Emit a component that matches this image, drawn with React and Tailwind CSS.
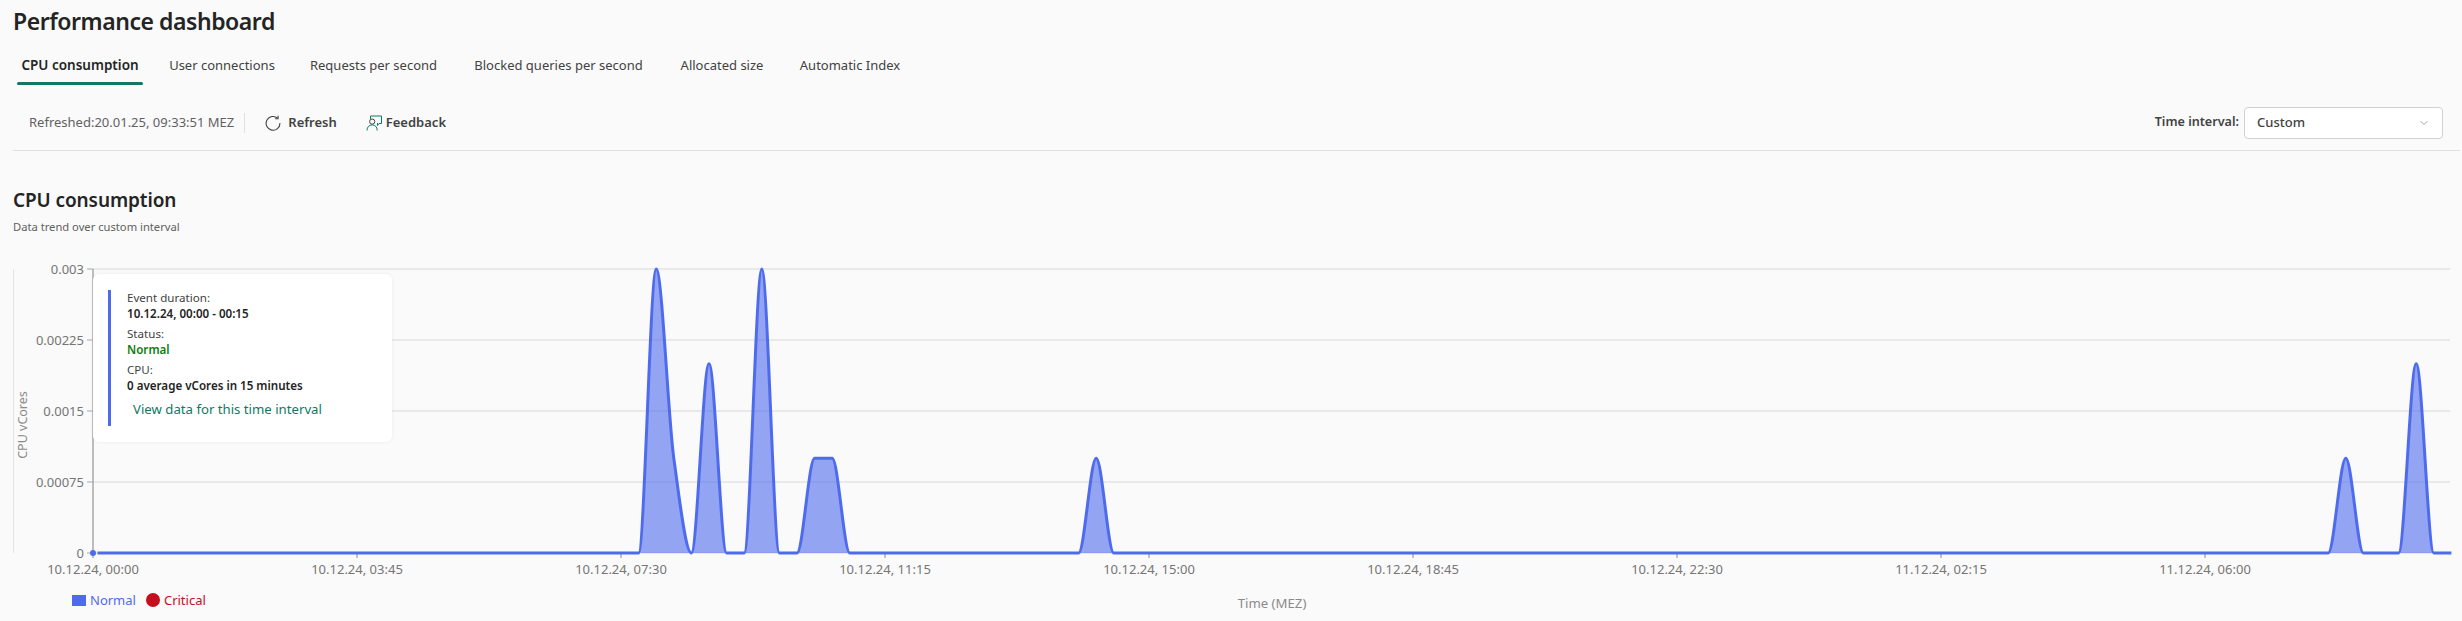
import React from "react";
import { ChevronDown } from "lucide-react";

const X0 = 93;
const STEP = 17.6;
const BASE = 553;
const TOP = 269;
const MAXV = 0.003;

const peaks = {
  32: 0.003, 33: 0.001, 35: 0.002, 38: 0.003, 41: 0.001, 42: 0.001,
  57: 0.001, 128: 0.001, 132: 0.002,
};
const data = Array.from({ length: 135 }, (_, i) => peaks[i] || 0);
const px = (i) => X0 + STEP * i;
const py = (v) => BASE - ((BASE - TOP) * v) / MAXV;

function monotonePath(from, to) {
  const xs = [];
  const ys = [];
  for (let i = from; i <= to; i++) {
    xs.push(px(i));
    ys.push(py(data[i]));
  }
  const n = xs.length;
  const d = [];
  for (let i = 0; i < n - 1; i++) d.push((ys[i + 1] - ys[i]) / (xs[i + 1] - xs[i]));
  const m = new Array(n).fill(0);
  for (let i = 1; i < n - 1; i++) {
    m[i] = d[i - 1] * d[i] <= 0 ? 0 : (2 * d[i - 1] * d[i]) / (d[i - 1] + d[i]);
  }
  let s = `M${xs[0]},${ys[0]}`;
  for (let i = 0; i < n - 1; i++) {
    const h = (xs[i + 1] - xs[i]) / 3;
    s += `C${xs[i] + h},${ys[i] + m[i] * h} ${xs[i + 1] - h},${ys[i + 1] - m[i + 1] * h} ${xs[i + 1]},${ys[i + 1]}`;
  }
  return s;
}

const line = monotonePath(0, 134);
const area = `${line}L${px(134)},${BASE}L${px(0)},${BASE}Z`;

const yTicks = [
  ["0.003", 269],
  ["0.00225", 340],
  ["0.0015", 411],
  ["0.00075", 482],
  ["0", 553],
];
const xTicks = [
  "10.12.24, 00:00",
  "10.12.24, 03:45",
  "10.12.24, 07:30",
  "10.12.24, 11:15",
  "10.12.24, 15:00",
  "10.12.24, 18:45",
  "10.12.24, 22:30",
  "11.12.24, 02:15",
  "11.12.24, 06:00",
];

const tabs = [
  ["CPU consumption", true, "ml-[4px] w-[126px]"],
  ["User connections", false, "ml-[23px] w-[112px]"],
  ["Requests per second", false, "ml-[29px] w-[133px]"],
  ["Blocked queries per second", false, "ml-[31px] w-[175px]"],
  ["Allocated size", false, "ml-[31px] w-[90px]"],
  ["Automatic Index", false, "ml-[29px] w-[108px]"],
];

function RefreshIcon() {
  return (
    <svg width="16" height="16" viewBox="0 0 16 16" fill="none" stroke="#424242" strokeWidth="1.1">
      <path d="M12.6 3.2A6.9 6.9 0 1 0 14.9 8" />
      <path d="M13.1 0.8v3h-3" />
    </svg>
  );
}

function FeedbackIcon() {
  return (
    <svg width="16" height="16" viewBox="0 0 16 16" fill="none" stroke="#117865" strokeWidth="1">
      <path d="M4.5 4V1h11v7.5l-2.5 0-1.5 2v-2.5" />
      <circle cx="6.2" cy="6.6" r="2.6" stroke="#424242" />
      <path d="M1 15.5c0-3.5 2.2-5.6 5.2-5.6s5 2 5 5.6" />
    </svg>
  );
}

export default function App() {
  return (
    <div className="relative h-[621px] w-full overflow-hidden bg-[#fafafa] font-['Noto_Sans',sans-serif] text-[#242424]">
      <h1 className="pl-[13px] pt-[4px] text-[23px] font-semibold leading-[34px] tracking-[-0.45px]">
        Performance dashboard
      </h1>

      <div className="mt-[7px] flex pl-[13px]">
        {tabs.map(([label, active, cls]) => (
          <div
            key={label}
            className={`relative flex h-[40px] shrink-0 items-center justify-center whitespace-nowrap leading-[20px] ${cls} ${active ? "text-[13.5px] font-semibold" : "text-[13px] text-[#424242]"}`}
          >
            {label}
            {active && (
              <span className="absolute bottom-[0px] left-0 h-[3px] w-full rounded-full bg-[#117865]" />
            )}
          </div>
        ))}
      </div>

      <div className="ml-[13px] mr-[2px] mt-[7px] flex h-[59px] items-center border-b border-[#e0e0e0] pt-[3px]">
        <span className="ml-[16px] whitespace-nowrap text-[13px] text-[#616161]">
          Refreshed:20.01.25, 09:33:51 MEZ
        </span>
        <span className="ml-[10px] h-[20px] w-px bg-[#e0e0e0]" />
        <span className="ml-[20px] flex items-center gap-[7px] text-[13px] font-semibold text-[#424242]">
          <RefreshIcon />
          Refresh
        </span>
        <span className="ml-[29px] flex items-center gap-[4px] text-[13px] font-semibold text-[#424242]">
          <FeedbackIcon />
          Feedback
        </span>
        <div className="ml-auto mr-[17px] flex items-center gap-[5px]">
          <span className="text-[12.6px] font-semibold text-[#424242]">Time interval:</span>
          <div className="flex h-[32px] w-[199px] items-center justify-between rounded-[4px] border border-[#d1d1d1] bg-white pl-[12px] pr-[12px] text-[13px] font-medium text-[#424242]">
            Custom
            <ChevronDown className="h-[12px] w-[12px] text-[#616161]" strokeWidth={1.2} />
          </div>
        </div>
      </div>

      <h2 className="pl-[13px] pt-[35px] text-[19px] font-semibold leading-[28px] tracking-[-0.1px]">
        CPU consumption
      </h2>
      <p className="pl-[13px] pt-[5px] text-[11.2px] leading-[16px] text-[#616161]">
        Data trend over custom interval
      </p>

      <div className="relative mt-[5px] h-[381px]">
        <svg width="2462" height="381" viewBox="0 240 2462 381" className="block">
          <line x1="13.5" x2="13.5" y1="269" y2="553" stroke="#e5e5e5" strokeWidth="1" />
          {yTicks.map(([, y]) => (
            <line key={y} x1="93" x2="2450" y1={y} y2={y} stroke="#e3e3e3" strokeWidth="1.5" />
          ))}
          <line x1="93" x2="93" y1="269" y2="553" stroke="#a8a8a8" strokeWidth="1.5" />
          {yTicks.map(([label, y]) => (
            <g key={label}>
              <line x1="87" x2="93" y1={y} y2={y} stroke="#a8a8a8" strokeWidth="1" />
              <text x="84" y={y + 5} textAnchor="end" className="fill-[#757575] text-[13px]">
                {label}
              </text>
            </g>
          ))}
          <text
            transform="translate(27 425) rotate(-90)"
            textAnchor="middle"
            className="fill-[#8a8a8a] text-[12.5px]"
          >
            CPU vCores
          </text>
          {xTicks.map((label, i) => {
            const x = X0 + 264 * i;
            return (
              <g key={label}>
                <line x1={x} x2={x} y1="553" y2="558" stroke="#8a8a8a" strokeWidth="1" />
                <text x={x} y="574" textAnchor="middle" className="fill-[#757575] text-[13px]">
                  {label}
                </text>
              </g>
            );
          })}
          <path d={area} fill="#4f6bed" fillOpacity="0.6" />
          <path
            d={line}
            fill="none"
            stroke="#4f6bed"
            strokeWidth="3"
            strokeDasharray="0 4.5 100000"
          />
          <circle cx="93" cy="553" r="3" fill="#4f6bed" />
          <text x="1272" y="608" textAnchor="middle" className="fill-[#8a8a8a] text-[13.2px]">
            Time (MEZ)
          </text>
        </svg>

        <div className="absolute left-[93px] top-[34px] flex h-[168px] w-[299px] rounded-[6px] bg-white pl-[15px] pt-[16px] shadow-[0_0_4px_rgba(0,0,0,0.06)]">
          <span className="h-[136px] w-[3px] bg-[#4f6bed]" />
          <div className="pl-[16px] text-[11.6px] leading-[16px]">
            <div className="text-[#424242]">Event duration:</div>
            <div className="font-semibold">10.12.24, 00:00 - 00:15</div>
            <div className="mt-[4px] text-[#424242]">Status:</div>
            <div className="font-semibold text-[#107c10]">Normal</div>
            <div className="mt-[4px] text-[#424242]">CPU:</div>
            <div className="font-semibold">0 average vCores in 15 minutes</div>
            <div className="ml-[6px] mt-[5px] text-[13.2px] leading-[20px] text-[#117865]">
              View data for this time interval
            </div>
          </div>
        </div>

        <div className="absolute left-[72px] top-[350px] flex items-center text-[13px] leading-[20px]">
          <span className="h-[11px] w-[14px] bg-[#4f6bed]" />
          <span className="ml-[4px] text-[#4f6bed]">Normal</span>
          <span className="ml-[10px] h-[14px] w-[14px] rounded-full bg-[#c50f1f]" />
          <span className="ml-[4px] text-[#c50f1f]">Critical</span>
        </div>
      </div>
    </div>
  );
}
